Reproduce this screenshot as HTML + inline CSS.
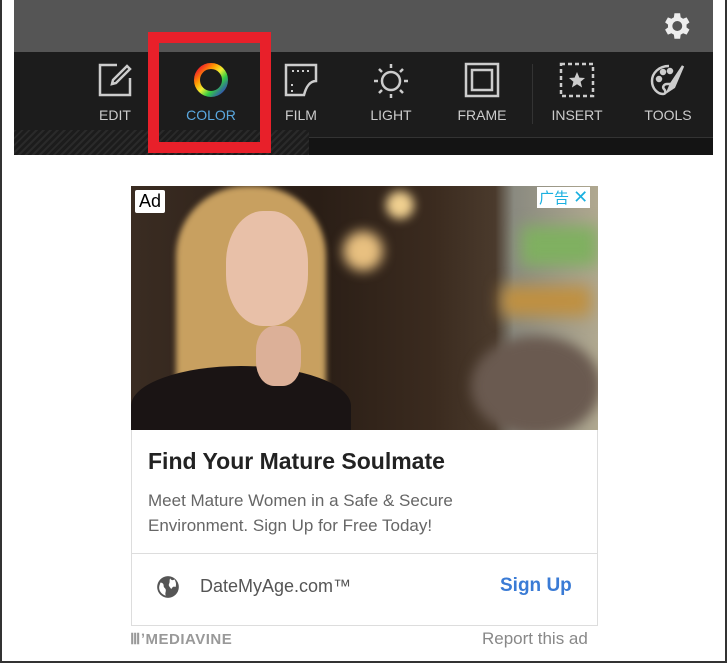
<!DOCTYPE html><html><head><style>
*{margin:0;padding:0;box-sizing:border-box}
body{width:727px;height:663px;background:#fff;position:relative;overflow:hidden;font-family:"Liberation Sans",Arial,sans-serif}
.frame{position:absolute;left:0;top:0;width:727px;height:663px;border:2px solid #333;border-top:0}
.top{position:absolute;left:14px;top:0;width:699px;height:52px;background:#555}
.bar{position:absolute;left:14px;top:52px;width:699px;height:103px;background:#1c1c1c}
.hatch{position:absolute;left:14px;top:130px;width:295px;height:25px;background:repeating-linear-gradient(135deg,#2a2a2a 0 2px,#1c1c1c 2px 5px)}
.pan{position:absolute;left:309px;top:137px;width:404px;height:18px;background:#141414;border-top:1px solid #333}
.lbl{position:absolute;top:107px;font-size:14px;color:#ccc;width:80px;text-align:center}
.ic{position:absolute;top:62px}
.red{position:absolute;left:148px;top:32px;width:123px;height:121px;border:11px solid #e8202a}
</style></head><body>
<div class="top"></div>
<svg style="position:absolute;left:659px;top:9px" width="34" height="34" viewBox="0 0 24 24"><path fill="#eee" d="M19.4 13a7.5 7.5 0 0 0 0-2l2.1-1.6-2-3.5-2.5 1a7 7 0 0 0-1.7-1L14.900 3h-4l-.4 2.9a7 7 0 0 0-1.7 1l-2.5-1-2 3.5L6.4 11a7.5 7.5 0 0 0 0 2l-2.1 1.6 2 3.5 2.5-1a7 7 0 0 0 1.7 1l.4 2.9h4l.4-2.9a7 7 0 0 0 1.7-1l2.5 1 2-3.5zM12.9 15.5a3.5 3.5 0 1 1 0-7 3.5 3.5 0 0 1 0 7z"/></svg>
<div class="bar"></div><div class="hatch"></div><div class="pan"></div>
<svg class="ic" style="left:97px" width="36" height="36" viewBox="0 0 36 36" fill="none" stroke="#ccc" stroke-width="2.5"><path d="M20 3H3v30h30V16"/><path d="M30 4l3 3-14 14-4 1 1-4z"/></svg>
<svg class="ic" style="left:192px" width="38" height="38" viewBox="0 0 38 38"><defs><linearGradient id="g" x1="0" y1="0" x2="1" y2="1"><stop offset="0" stop-color="#e03"/><stop offset=".3" stop-color="#f90"/><stop offset=".5" stop-color="#ee3"/><stop offset=".7" stop-color="#3c4"/><stop offset="1" stop-color="#33c"/></linearGradient></defs><circle cx="19" cy="18" r="14" fill="none" stroke="url(#g)" stroke-width="6"/></svg>
<svg class="ic" style="left:283px" width="36" height="36" viewBox="0 0 36 36" fill="none" stroke="#ccc" stroke-width="2.5"><path d="M3 3h30v16c-6 0-10 6-12 14H3z"/><path d="M9 9h2M14 9h2M19 9h2M24 9h2M9 22v2M9 28v2" stroke-width="2"/></svg>
<svg class="ic" style="left:372px" width="38" height="38" viewBox="0 0 38 38" fill="none" stroke="#ccc" stroke-width="2.5"><circle cx="19" cy="19" r="9"/><path d="M19 2v4M19 32v4M2 19h4M32 19h4M7 7l3 3M28 28l3 3M7 31l3-3M28 10l3-3"/></svg>
<svg class="ic" style="left:464px" width="36" height="36" viewBox="0 0 36 36" fill="none" stroke="#ccc" stroke-width="2.5"><rect x="2" y="2" width="32" height="32"/><rect x="8" y="8" width="20" height="20"/></svg>
<div style="position:absolute;left:532px;top:64px;width:1px;height:60px;background:#333"></div>
<svg class="ic" style="left:559px" width="36" height="36" viewBox="0 0 36 36" fill="none" stroke="#ccc" stroke-width="2.5"><rect x="2" y="2" width="32" height="32" stroke-dasharray="4 3"/><path fill="#ccc" stroke="none" d="M18 10l2.4 5.6 5.6.4-4.4 3.8 1.5 5.7L18 22.3l-5.1 3.2 1.5-5.7L10 16l5.6-.4z"/></svg>
<svg class="ic" style="left:649px" width="38" height="36" viewBox="0 0 38 36" fill="none" stroke="#ccc" stroke-width="2.5"><path d="M20 4C10 4 3 11 3 19c0 8 6 13 11 13 3 0 3-3 1-5-2-2 0-5 3-5h5"/><circle cx="10" cy="17" r="2" fill="#ccc"/><circle cx="14" cy="10" r="2" fill="#ccc"/><circle cx="21" cy="9" r="2" fill="#ccc"/><path d="M34 4L22 22l-3 7 6-4z" fill="#ccc"/></svg>
<div class="lbl" style="left:75px">EDIT</div>
<div class="lbl" style="left:171px;color:#5aa8e0">COLOR</div>
<div class="lbl" style="left:261px">FILM</div>
<div class="lbl" style="left:351px">LIGHT</div>
<div class="lbl" style="left:442px">FRAME</div>
<div class="lbl" style="left:537px">INSERT</div>
<div class="lbl" style="left:628px">TOOLS</div>
<div class="red"></div>

<div style="position:absolute;left:131px;top:186px;width:467px;height:440px;border:1px solid #ddd"></div>
<div style="position:absolute;left:131px;top:186px;width:467px;height:244px;overflow:hidden;background:linear-gradient(90deg,#3a2c22 0%,#2a1e16 40%,#3b2b1f 65%,#4a3a2c 78%,#8a8a80 82%,#b0a890 100%)">
<div style="position:absolute;left:390px;top:40px;width:77px;height:40px;background:#7fb060;filter:blur(8px)"></div>
<div style="position:absolute;left:370px;top:100px;width:90px;height:30px;background:#c09040;filter:blur(8px)"></div>
<div style="position:absolute;left:340px;top:150px;width:130px;height:100px;background:#6a5a50;border-radius:50%;filter:blur(6px)"></div>
<div style="position:absolute;left:255px;top:5px;width:28px;height:28px;background:#f0d090;border-radius:50%;filter:blur(5px)"></div>
<div style="position:absolute;left:212px;top:45px;width:40px;height:40px;background:#e8c080;border-radius:50%;filter:blur(6px)"></div>
<div style="position:absolute;left:45px;top:0;width:150px;height:250px;background:#c8a060;border-radius:70px 70px 20px 20px;filter:blur(3px)"></div>
<div style="position:absolute;left:0;top:180px;width:220px;height:80px;background:#1a1414;border-radius:50% 50% 0 0"></div>
<div style="position:absolute;left:95px;top:25px;width:82px;height:115px;background:#e8c0a8;border-radius:45%;"></div>
<div style="position:absolute;left:125px;top:140px;width:45px;height:60px;background:#dcb098;border-radius:40%"></div>
</div>
<div style="position:absolute;left:135px;top:190px;background:#fff;padding:1px 4px;font-size:18px;border-radius:2px">Ad</div>
<div style="position:absolute;left:537px;top:187px;background:#fff;color:#1ab0e0;font-size:15px;font-family:'Liberation Sans','Noto Sans CJK SC',sans-serif;padding:0 2px">广告 <span style="font-size:18px">✕</span></div>
<div style="position:absolute;left:148px;top:448px;font-size:23px;font-weight:bold;color:#222">Find Your Mature Soulmate</div>
<div style="position:absolute;left:148px;top:488px;font-size:17px;line-height:25px;color:#666">Meet Mature Women in a Safe &amp; Secure<br>Environment. Sign Up for Free Today!</div>
<div style="position:absolute;left:131px;top:553px;width:467px;height:1px;background:#ddd"></div>
<svg style="position:absolute;left:155px;top:574px" width="26" height="26" viewBox="0 0 24 24"><circle cx="12" cy="12" r="10" fill="#555"/><path fill="#fff" d="M5 8c2 0 3 1 3 3s2 2 2 4-1 3 0 5c-4-1-7-5-6-9zM14 4c1 2 3 2 4 1 1 2 2 4 1 7-2-1-3 0-4 2-1-2-3-3-2-5s0-3 1-5z"/></svg>
<div style="position:absolute;left:200px;top:576px;font-size:18px;color:#555">DateMyAge.com™</div>
<div style="position:absolute;left:500px;top:575px;font-size:19px;font-weight:bold;color:#3a7bd5">Sign Up</div>
<div style="position:absolute;left:130px;top:630px;font-size:15px;font-weight:bold;color:#999;letter-spacing:.5px">ⅢʼMEDIAVINE</div>
<div style="position:absolute;left:482px;top:629px;font-size:17px;color:#888">Report this ad</div>
<div class="frame"></div>
</body></html>
